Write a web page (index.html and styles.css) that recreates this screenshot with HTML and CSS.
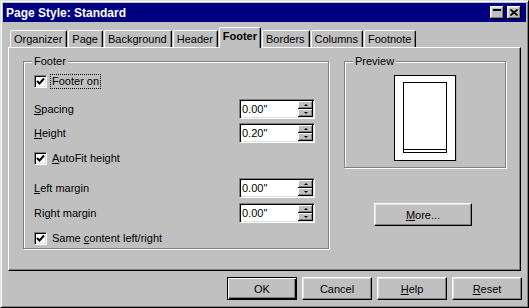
FILE: index.html
```html
<!DOCTYPE html>
<html>
<head>
  <title>Page Style: Standard</title>
  <link rel="stylesheet" href="styles.css">
</head>
<body>
  <div class="window">
    <div class="titlebar">
      <span class="title">Page Style: Standard</span>
      <div class="caption-btns">
        <span class="cap-btn">
          <svg width="8" height="8" viewBox="0 0 8 8"><rect x="0" y="0" width="8" height="2" fill="#000"/></svg>
        </span>
        <span class="cap-btn">
          <svg width="8" height="7" viewBox="0 0 8 7"><path d="M0.5 0.5 L7.5 6.5 M7.5 0.5 L0.5 6.5" stroke="#000" stroke-width="1.6" fill="none"/></svg>
        </span>
      </div>
    </div>

    <div class="tabs">
      <div class="tab">Organizer</div>
      <div class="tab">Page</div>
      <div class="tab">Background</div>
      <div class="tab">Header</div>
      <div class="tab active">Footer</div>
      <div class="tab">Borders</div>
      <div class="tab">Columns</div>
      <div class="tab">Footnote</div>
    </div>

    <div class="panel">
      <div class="group footer-group">
        <span class="group-label">Footer</span>

        <div class="row check-row">
          <span class="checkbox"><svg width="9" height="9" viewBox="0 0 9 9"><path d="M1 4 L3.5 6.5 L8 1.5" stroke="#000" stroke-width="2" fill="none"/></svg></span>
          <span class="check-label focused">Footer on</span>
        </div>

        <div class="row spin-row gap-md">
          <span class="field-label"><u>S</u>pacing</span>
          <div class="spinbox">
            <span class="spin-value">0.00"</span>
            <div class="spin-btns">
              <span class="spin-btn"><i class="arrow-up"></i></span>
              <span class="spin-btn"><i class="arrow-down"></i></span>
            </div>
          </div>
        </div>

        <div class="row spin-row gap-xs">
          <span class="field-label"><u>H</u>eight</span>
          <div class="spinbox">
            <span class="spin-value">0.20"</span>
            <div class="spin-btns">
              <span class="spin-btn"><i class="arrow-up"></i></span>
              <span class="spin-btn"><i class="arrow-down"></i></span>
            </div>
          </div>
        </div>

        <div class="row check-row gap-sm">
          <span class="checkbox"><svg width="9" height="9" viewBox="0 0 9 9"><path d="M1 4 L3.5 6.5 L8 1.5" stroke="#000" stroke-width="2" fill="none"/></svg></span>
          <span class="check-label"><u>A</u>utoFit height</span>
        </div>

        <div class="row spin-row gap-lg">
          <span class="field-label"><u>L</u>eft margin</span>
          <div class="spinbox">
            <span class="spin-value">0.00"</span>
            <div class="spin-btns">
              <span class="spin-btn"><i class="arrow-up"></i></span>
              <span class="spin-btn"><i class="arrow-down"></i></span>
            </div>
          </div>
        </div>

        <div class="row spin-row gap-xs2">
          <span class="field-label">Ri<u>g</u>ht margin</span>
          <div class="spinbox">
            <span class="spin-value">0.00"</span>
            <div class="spin-btns">
              <span class="spin-btn"><i class="arrow-up"></i></span>
              <span class="spin-btn"><i class="arrow-down"></i></span>
            </div>
          </div>
        </div>

        <div class="row check-row gap-sm">
          <span class="checkbox"><svg width="9" height="9" viewBox="0 0 9 9"><path d="M1 4 L3.5 6.5 L8 1.5" stroke="#000" stroke-width="2" fill="none"/></svg></span>
          <span class="check-label">Same <u>c</u>ontent left/right</span>
        </div>
      </div>

      <div class="side">
        <div class="group preview-group">
          <span class="group-label">Preview</span>
          <div class="page">
            <div class="page-inner">
              <div class="page-footer"></div>
            </div>
          </div>
        </div>
        <button class="btn more-btn"><u>M</u>ore...</button>
      </div>
    </div>

    <div class="buttons">
      <button class="btn default">OK</button>
      <button class="btn">Cancel</button>
      <button class="btn"><u>H</u>elp</button>
      <button class="btn"><u>R</u>eset</button>
    </div>
  </div>
</body>
</html>
```

FILE: styles.css
```css
body {
  margin: 0;
  padding: 0;
  background-color: #c0c0c0;
  font-family: "Liberation Sans", Arial, sans-serif;
  font-size: 11px;
  color: #000;
}

.window {
  width: 529px;
  height: 308px;
  box-sizing: border-box;
  background-color: #c0c0c0;
  border: 1px solid;
  border-color: #dfdfdf #000 #000 #dfdfdf;
  box-shadow: inset 1px 1px 0 #fff, inset -1px -1px 0 #808080;
  padding: 2px;
}

.titlebar {
  height: 19px;
  background-color: #000080;
  display: flex;
  align-items: center;
  justify-content: space-between;
  padding: 0 5px 0 3px;
}

.title {
  color: #fff;
  font-weight: bold;
  font-size: 12px;
}

.caption-btns {
  display: flex;
  gap: 3px;
}

.cap-btn {
  width: 14px;
  height: 13px;
  box-sizing: border-box;
  background-color: #c0c0c0;
  box-shadow: inset -1px -1px 0 #000, inset 1px 1px 0 #fff, inset -2px -2px 0 #808080, inset 2px 2px 0 #dfdfdf;
  display: flex;
  align-items: center;
  justify-content: center;
}

.cap-btn:first-child {
  align-items: flex-start;
  padding-top: 3px;
}

/* tabs */

.tabs {
  display: flex;
  align-items: flex-end;
  height: 20px;
  margin-top: 5px;
  padding-left: 7px;
  position: relative;
  z-index: 1;
}

.tab {
  height: 17px;
  box-sizing: border-box;
  padding: 0 4px 0 3px;
  margin-right: 1px;
  line-height: 16px;
  border-top: 1px solid #fff;
  border-left: 1px solid #fff;
  border-right: 1px solid #000;
  border-radius: 2px 2px 0 0;
  box-shadow: inset -1px 0 0 #808080;
  background-color: #c0c0c0;
}

.tab.active {
  height: 21px;
  margin-bottom: -1px;
  font-weight: bold;
  padding: 0 3px 0 3px;
  line-height: 17px;
}

.panel {
  height: 224px;
  box-sizing: border-box;
  margin: 0 5px;
  border: 1px solid;
  border-color: #fff #000 #000 #fff;
  box-shadow: inset -1px -1px 0 #808080;
  padding: 13px 0 0 14px;
  display: flex;
  gap: 15px;
  align-items: flex-start;
}

/* group boxes */

.group {
  position: relative;
  box-sizing: border-box;
  border: 1px solid #808080;
  box-shadow: inset 1px 1px 0 #fff, 1px 1px 0 #fff;
}

.group-label {
  position: absolute;
  top: -8px;
  left: 8px;
  padding: 0 2px;
  line-height: 14px;
  background-color: #c0c0c0;
}

.footer-group {
  width: 306px;
  height: 188px;
  padding: 11px 10px 0 10px;
  display: flex;
  flex-direction: column;
}

.row {
  display: flex;
  align-items: center;
}

.check-row {
  height: 16px;
}

.spin-row {
  height: 20px;
}

.gap-xs { margin-top: 4px; }
.gap-xs2 { margin-top: 5px; }
.gap-sm { margin-top: 7px; }
.gap-md { margin-top: 10px; }
.gap-lg { margin-top: 12px; }

.checkbox {
  width: 13px;
  height: 13px;
  box-sizing: border-box;
  background-color: #fff;
  border: 1px solid;
  border-color: #808080 #fff #fff #808080;
  box-shadow: inset 1px 1px 0 #000, inset -1px -1px 0 #dfdfdf;
  display: flex;
  align-items: center;
  justify-content: center;
}

.check-label {
  margin-left: 3px;
  padding: 0 1px;
  border: 1px dotted transparent;
  line-height: 13px;
}

.check-label.focused {
  border-color: #000;
}

.field-label {
  flex: 0 0 205px;
}

.spinbox {
  width: 76px;
  height: 20px;
  box-sizing: border-box;
  background-color: #fff;
  border: 1px solid;
  border-color: #808080 #fff #fff #808080;
  box-shadow: inset 1px 1px 0 #000, inset -1px -1px 0 #dfdfdf;
  padding: 1px 1px 1px 2px;
  display: flex;
  align-items: stretch;
}

.spin-value {
  flex: 1;
  line-height: 16px;
}

.spin-btns {
  width: 15px;
  display: flex;
  flex-direction: column;
}

.spin-btn {
  flex: 1;
  background-color: #c0c0c0;
  box-shadow: inset -1px -1px 0 #000, inset 1px 1px 0 #fff, inset -2px -2px 0 #808080;
  display: flex;
  align-items: center;
  justify-content: center;
}

.arrow-up {
  width: 0;
  height: 0;
  border-left: 2px solid transparent;
  border-right: 2px solid transparent;
  border-bottom: 2px solid #000;
}

.arrow-down {
  width: 0;
  height: 0;
  border-left: 2px solid transparent;
  border-right: 2px solid transparent;
  border-top: 2px solid #000;
}

/* preview column */

.side {
  width: 162px;
  display: flex;
  flex-direction: column;
}

.preview-group {
  height: 107px;
  padding-top: 13px;
  display: flex;
  justify-content: center;
}

.page {
  width: 62px;
  height: 86px;
  box-sizing: border-box;
  background-color: #fff;
  border: 1px solid #000;
  padding: 6px 8px 7px 8px;
  box-shadow: 1px 0 0 #a8a8a8;
}

.page-inner {
  height: 100%;
  box-sizing: border-box;
  border: 1px solid #000;
  display: flex;
  flex-direction: column;
  justify-content: flex-end;
}

.page-footer {
  height: 2px;
  border-top: 1px solid #000;
}

/* buttons */

.btn {
  font-family: "Liberation Sans", Arial, sans-serif;
  font-size: 11px;
  color: #000;
  background-color: #c0c0c0;
  height: 23px;
  width: 70px;
  padding: 0;
  border: 1px solid;
  border-color: #fff #000 #000 #fff;
  box-shadow: inset -1px -1px 0 #808080, inset 1px 1px 0 #dfdfdf;
}

.btn.default {
  border-color: #000;
  box-shadow: inset 1px 1px 0 #fff, inset -1px -1px 0 #000, inset -2px -2px 0 #808080;
}

.more-btn {
  width: 98px;
  margin-top: 35px;
  margin-left: 30px;
}

.buttons {
  display: flex;
  justify-content: flex-end;
  gap: 5px;
  margin-top: 6px;
  padding-right: 4px;
}
```
